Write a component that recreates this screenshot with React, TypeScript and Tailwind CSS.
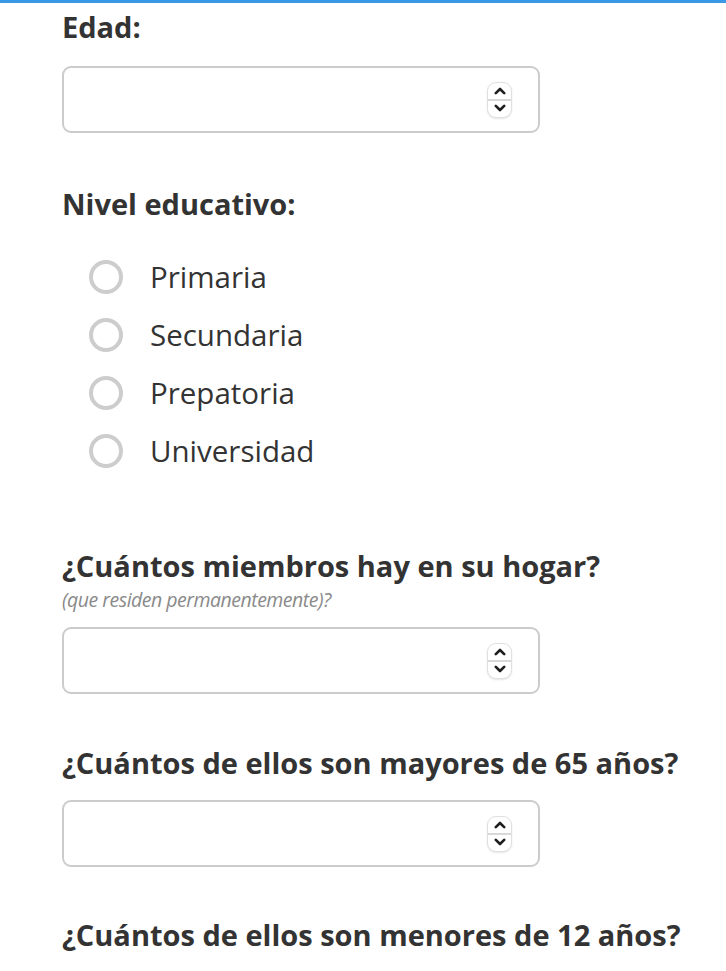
import React from "react";

const Spinner: React.FC = () => (
  <div className="flex h-[36px] w-[25px] flex-col overflow-hidden rounded-[9px] border border-[#e0e0e0] bg-white shadow-[0_1px_2px_rgba(0,0,0,0.1)]">
    <div className="flex flex-1 items-center justify-center border-b-2 border-[#d8d8d8] pt-[1px]">
      <svg width="12" height="8" viewBox="0 0 12 8" fill="none">
        <polyline points="1.8,6.2 6,2 10.2,6.2" stroke="#1f1f1f" strokeWidth="2.6" strokeLinecap="round" strokeLinejoin="round" />
      </svg>
    </div>
    <div className="flex flex-1 items-center justify-center pb-[1px]">
      <svg width="12" height="8" viewBox="0 0 12 8" fill="none">
        <polyline points="1.8,1.8 6,6 10.2,1.8" stroke="#1f1f1f" strokeWidth="2.6" strokeLinecap="round" strokeLinejoin="round" />
      </svg>
    </div>
  </div>
);

const NumberBox: React.FC<{ className?: string }> = ({ className = "" }) => (
  <div className={`flex h-[67px] w-[478px] items-center justify-end rounded-[9px] border-2 border-[#cccccc] bg-white pr-[26px] ${className}`}>
    <Spinner />
  </div>
);

const Heading: React.FC<{ children: React.ReactNode; className?: string }> = ({ children, className = "" }) => (
  <h2 className={`text-[29px] font-bold leading-[36px] text-[#333333] ${className}`}>{children}</h2>
);

const App: React.FC = () => {
  const niveles = ["Primaria", "Secundaria", "Prepatoria", "Universidad"];

  return (
    <div className="min-h-screen bg-white font-['Open_Sans',sans-serif] text-[#333333]">
      <div className="h-[3px] bg-[#3a99e6]" />
      <div className="pl-[62px]">
        <Heading className="mt-[6px]">Edad:</Heading>
        <NumberBox className="mt-[21px]" />

        <Heading className="mt-[53px]">Nivel educativo:</Heading>
        <div className="mt-[26px] flex flex-col">
          {niveles.map((nivel) => (
            <label key={nivel} className="flex h-[58px] items-center gap-[27px] pl-[27px]">
              <span className="h-[34px] w-[34px] shrink-0 rounded-full border-4 border-[#cdcdcd]" />
              <span className="text-[29.5px] leading-[36px] text-[#333333]">{nivel}</span>
            </label>
          ))}
        </div>

        <Heading className="mt-[68px]">¿Cuántos miembros hay en su hogar?</Heading>
        <p className="mt-[3px] text-[19.5px] italic leading-[25px] tracking-[-0.5px] text-[#8a8a8a]">(que residen permanentemente)?</p>
        <NumberBox className="mt-[15px]" />

        <Heading className="mt-[51px]">¿Cuántos de ellos son mayores de 65 años?</Heading>
        <NumberBox className="mt-[19px]" />

        <Heading className="mt-[50px]">¿Cuántos de ellos son menores de 12 años?</Heading>
      </div>
    </div>
  );
};

export default App;
